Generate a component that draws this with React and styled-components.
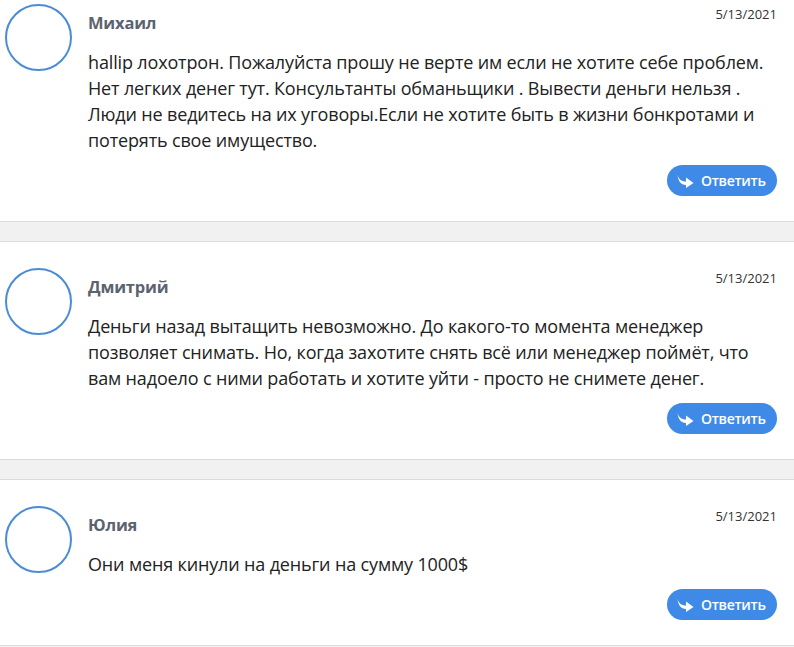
import React from 'react'
import styled, { createGlobalStyle } from 'styled-components'

const GlobalStyle = createGlobalStyle`
    html, body {
        margin: 0;
        padding: 0;
        background: #fff;
    }
    body {
        font-family: 'Open Sans', 'Noto Sans', sans-serif;
        overflow: hidden;
    }
`

const List = styled.div`
    width: 794px;
`

const Comment = styled.div`
    display: flex;
    align-items: flex-start;
    padding: ${props => (props.$cropped ? '4px' : '26px')} 17px 25px 5px;
`

const Avatar = styled.div`
    flex: 0 0 auto;
    width: 63px;
    height: 63px;
    border: 2px solid #4a8cd6;
    border-radius: 50%;
    margin-right: 16px;
`

const Body = styled.div`
    flex: 1;
    display: flex;
    flex-direction: column;
`

const Header = styled.div`
    display: flex;
    justify-content: space-between;
    align-items: flex-start;
    padding-top: 2px;
`

const Name = styled.div`
    margin-top: 6px;
    font-size: 16.5px;
    line-height: 22px;
    font-weight: 700;
    letter-spacing: -0.2px;
    color: #5c636f;
`

const Date = styled.div`
    font-size: 13px;
    line-height: 17px;
    color: #333;
`

const Text = styled.div`
    margin-top: 15px;
    font-size: 18px;
    letter-spacing: -0.15px;
    line-height: 26px;
    color: #222;
`

const Line = styled.span`
    display: block;
    white-space: nowrap;
`

const Footer = styled.div`
    display: flex;
    justify-content: flex-end;
    margin-top: 12px;
`

const ReplyButton = styled.button`
    display: flex;
    align-items: center;
    gap: 7px;
    height: 31px;
    width: 110px;
    padding: 0 0 0 10px;
    border: none;
    border-radius: 16px;
    background: #3f8ae6;
    color: #fff;
    font-family: 'Open Sans', 'Noto Sans', sans-serif;
    font-size: 14px;
    font-weight: 600;
    letter-spacing: -0.3px;
    cursor: pointer;
`

const Divider = styled.div`
    height: 19px;
    background: #f1f1f1;
    border-top: 1px solid #dcdcdc;
    border-bottom: 1px solid #dcdcdc;
`

const ReplyIcon = () => (
    <svg width="17" height="14" viewBox="0 0 17 14">
        <path
            d="M0.6 1 C1.6 5 4.2 7.4 9 7.6 L9 3.4 L16.5 8.9 L9 14 L9 11 C4 11 1 7 0.6 1 Z"
            fill="#fff"
        />
    </svg>
)

const comments = [
    {
        name: 'Михаил',
        date: '5/13/2021',
        lines: [
            'hallip лохотрон. Пожалуйста прошу не верте им если не хотите себе проблем.',
            'Нет легких денег тут. Консультанты обманьщики . Вывести деньги нельзя .',
            'Люди не ведитесь на их уговоры.Если не хотите быть в жизни бонкротами и',
            'потерять свое имущество.',
        ],
    },
    {
        name: 'Дмитрий',
        date: '5/13/2021',
        lines: [
            'Деньги назад вытащить невозможно. До какого-то момента менеджер',
            'позволяет снимать. Но, когда захотите снять всё или менеджер поймёт, что',
            'вам надоело с ними работать и хотите уйти - просто не снимете денег.',
        ],
    },
    {
        name: 'Юлия',
        date: '5/13/2021',
        lines: ['Они меня кинули на деньги на сумму 1000$'],
    },
]

export default function App() {
    return (
        <List>
            <GlobalStyle />
            {comments.map((c, i) => (
                <React.Fragment key={c.name}>
                    <Comment $cropped={i === 0}>
                        <Avatar />
                        <Body>
                            <Header>
                                <Name>{c.name}</Name>
                                <Date>{c.date}</Date>
                            </Header>
                            <Text>
                                {c.lines.map(line => (
                                    <Line key={line}>{line}</Line>
                                ))}
                            </Text>
                            <Footer>
                                <ReplyButton>
                                    <ReplyIcon />
                                    Ответить
                                </ReplyButton>
                            </Footer>
                        </Body>
                    </Comment>
                    <Divider />
                </React.Fragment>
            ))}
        </List>
    )
}
